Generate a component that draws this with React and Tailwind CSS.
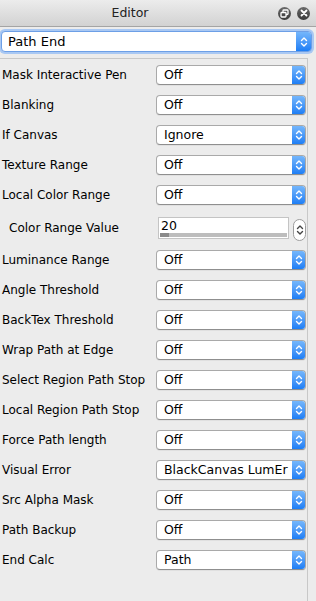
const font = { fontFamily: '"DejaVu Sans", "Liberation Sans", sans-serif' }

const rows = [
  { label: 'Mask Interactive Pen', value: 'Off' },
  { label: 'Blanking', value: 'Off' },
  { label: 'If Canvas', value: 'Ignore' },
  { label: 'Texture Range', value: 'Off' },
  { label: 'Local Color Range', value: 'Off' },
  { label: 'Color Range Value', spin: '20' },
  { label: 'Luminance Range', value: 'Off' },
  { label: 'Angle Threshold', value: 'Off' },
  { label: 'BackTex Threshold', value: 'Off' },
  { label: 'Wrap Path at Edge', value: 'Off' },
  { label: 'Select Region Path Stop', value: 'Off' },
  { label: 'Local Region Path Stop', value: 'Off' },
  { label: 'Force Path length', value: 'Off' },
  { label: 'Visual Error', value: 'BlackCanvas LumEr' },
  { label: 'Src Alpha Mask', value: 'Off' },
  { label: 'Path Backup', value: 'Off' },
  { label: 'End Calc', value: 'Path' },
]

// small up/down chevrons used in the mac-style popup buttons
function Arrows({ color = 'white' }) {
  return (
    <svg width="8" height="12" viewBox="0 0 8 12" fill="none" stroke={color} strokeWidth="1.4" strokeLinecap="round" strokeLinejoin="round">
      <path d="M1.5 4.5 L4 2 L6.5 4.5" />
      <path d="M1.5 7.5 L4 10 L6.5 7.5" />
    </svg>
  )
}

function Select({ value }) {
  return (
    <div className="flex h-[20px] w-[150px] overflow-hidden rounded-[4px] border border-[#a9a9a9] border-b-[#8f8f8f] bg-white shadow-[0_1px_0_rgba(0,0,0,0.05)]">
      <div className="flex flex-1 items-center overflow-hidden whitespace-nowrap pl-[7px] text-[12.5px] leading-none text-black">
        {value}
      </div>
      <div className="flex w-[13px] shrink-0 items-center justify-center bg-gradient-to-b from-[#74b6fb] to-[#1c7ef5]">
        <Arrows />
      </div>
    </div>
  )
}

function Spin({ value }) {
  return (
    <div className="flex items-center gap-[4px]">
      <div className="flex h-[22px] w-[131px] flex-col border border-[#c4c4c4] bg-white">
        <div className="pl-[2px] text-[12.5px] leading-[15px] text-black">{value}</div>
        <div className="mx-[1px] mt-auto mb-[1px] flex h-[5px] bg-[#bdbdbd]">
          <div className="w-[9px] bg-[#8a8a8a]" />
        </div>
      </div>
      <div className="mt-[4px] flex h-[22px] w-[13px] items-center justify-center rounded-full border border-[#9d9d9d] bg-white">
        <Arrows color="#444" />
      </div>
    </div>
  )
}

function TitleButton({ children }) {
  return (
    <div className="flex h-[13px] w-[13px] items-center justify-center rounded-full bg-gradient-to-b from-[#6b6b6b] to-[#3a3a3a]">
      {children}
    </div>
  )
}

export default function App() {
  return (
    <div className="flex h-[601px] w-[316px] flex-col overflow-hidden bg-[#ececec]" style={font}>
      {/* title bar */}
      <div className="flex h-[27px] shrink-0 items-center border-b border-[#a4a4a4] bg-gradient-to-b from-[#ececec] to-[#d2d2d2]">
        <div className="flex-1 pr-[18px] text-center text-[12.5px] text-[#222]">Editor</div>
        <div className="flex items-center gap-[6px] pr-[6px]">
          <TitleButton>
            <svg width="9" height="9" viewBox="0 0 9 9" fill="none" stroke="white" strokeWidth="1.3">
              <rect x="3" y="1" width="5" height="4.5" rx="0.8" />
              <rect x="1" y="3.5" width="5" height="4.5" rx="0.8" fill="#4a4a4a" />
            </svg>
          </TitleButton>
          <TitleButton>
            <svg width="8" height="8" viewBox="0 0 8 8" stroke="white" strokeWidth="1.8" strokeLinecap="round">
              <path d="M1.5 1.5 L6.5 6.5 M6.5 1.5 L1.5 6.5" />
            </svg>
          </TitleButton>
        </div>
      </div>

      {/* top popup */}
      <div className="px-[1px] pt-[4px] pb-[6px] pr-[4px]">
        <div className="flex h-[21px] overflow-hidden rounded-[4px] border border-[#6d9fe6] bg-white shadow-[0_0_0_2px_#a9c8f3]">
          <div className="flex flex-1 items-center pl-[6px] text-[13px] text-black">Path End</div>
          <div className="flex w-[15px] items-center justify-center bg-gradient-to-b from-[#74b6fb] to-[#1c7ef5]">
            <Arrows />
          </div>
        </div>
      </div>

      {/* property list */}
      <div className="flex flex-1">
        <div className="flex w-[308px] flex-col border-t border-r border-[#c8c8c8] pt-[1px]">
          {rows.map((r) =>
            r.spin ? (
              <div key={r.label} className="flex h-[35px] items-center justify-between pr-[1px]">
                <span className="pl-[9px] text-[12px] text-black">{r.label}</span>
                <Spin value={r.spin} />
              </div>
            ) : (
              <div key={r.label} className="flex h-[30px] items-center justify-between pr-[1px]">
                <span className="whitespace-nowrap pl-[2px] text-[12px] text-black">{r.label}</span>
                <Select value={r.value} />
              </div>
            )
          )}
        </div>
      </div>
    </div>
  )
}
